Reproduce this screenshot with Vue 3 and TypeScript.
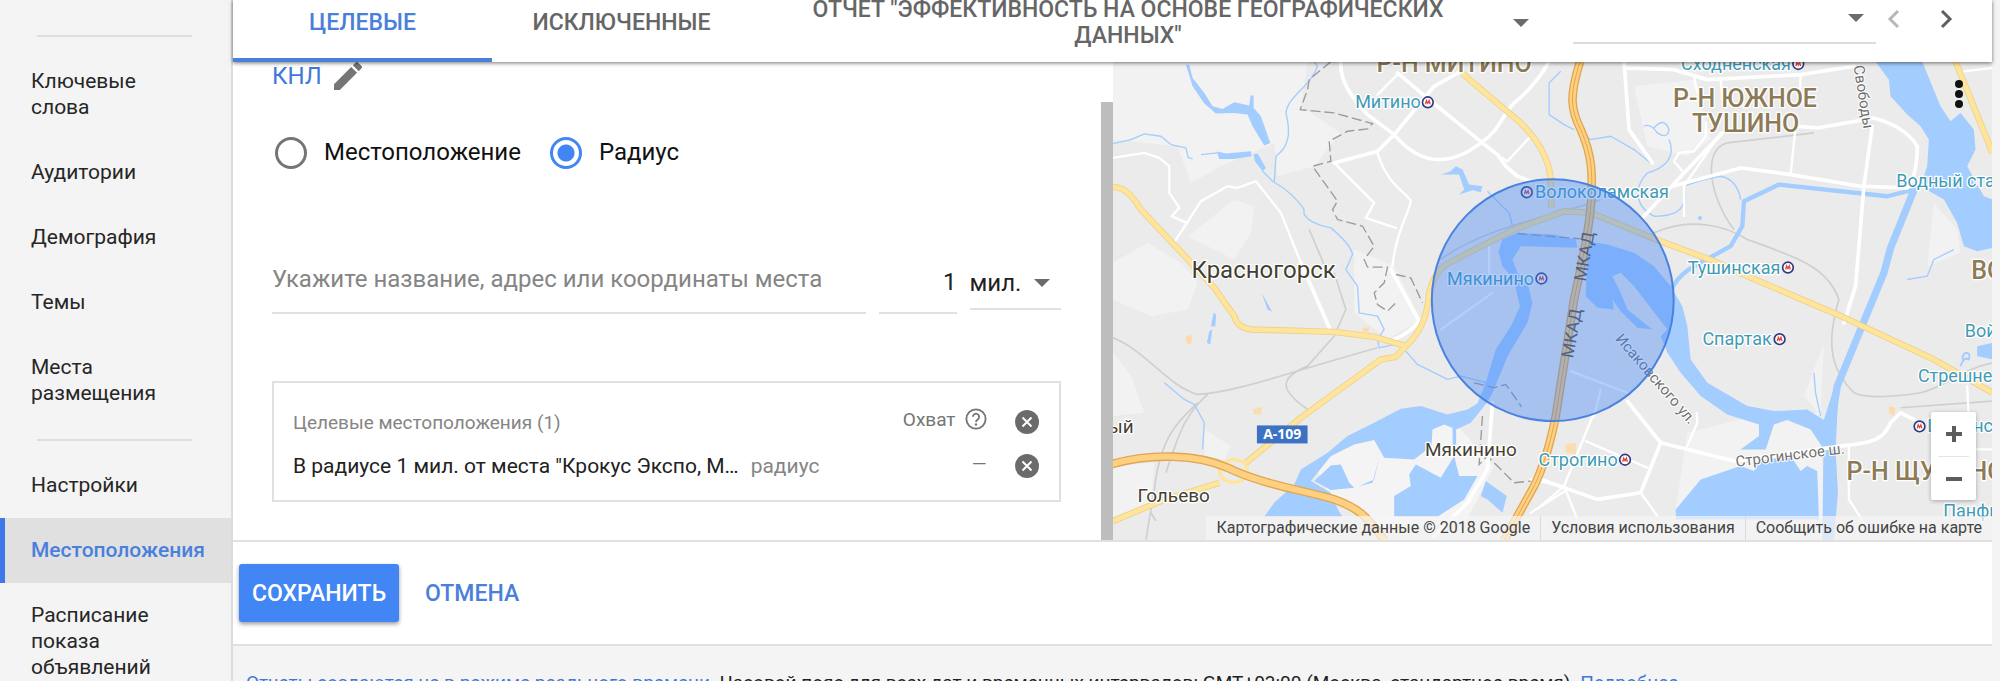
<script setup lang="ts">
import { ref } from 'vue'

interface NavItem {
  label: string
  active?: boolean
  divider?: boolean
}

interface MapLabel {
  text: string
  x: number
  y: number
  kind: 'metro' | 'city' | 'town' | 'district' | 'street' | 'highway'
  rotate?: number
  anchor?: 'start' | 'middle' | 'end'
}

const navItems: NavItem[] = [
  { label: 'Группы', divider: true },
  { label: 'Ключевые слова' },
  { label: 'Аудитории' },
  { label: 'Демография' },
  { label: 'Темы' },
  { label: 'Места размещения', divider: true },
  { label: 'Настройки' },
  { label: 'Местоположения', active: true },
  { label: 'Расписание показа объявлений' },
]

const mode = ref<'place' | 'radius'>('radius')
const query = ref('')
const distance = ref('1')
const unit = ref('mi')
const period = ref('')

const lowerLabels: MapLabel[] = [
  { text: 'Волоколамская', x: 1303, y: 596, kind: 'metro', anchor: 'start' },
  { text: 'Мякинино', x: 1300, y: 855, kind: 'metro', anchor: 'end' },
  { text: 'МКАД', x: 1468, y: 774, kind: 'highway', rotate: -80 },
  { text: 'МКАД', x: 1430, y: 1004, kind: 'highway', rotate: -80 },
  { text: 'Исаковского ул.', x: 1654, y: 1148, kind: 'street', rotate: 49 },
]

const labels: MapLabel[] = [
  { text: 'Р-Н МИТИНО', x: 1060, y: 216, kind: 'district' },
  { text: 'Р-Н ЮЖНОЕ', x: 1933, y: 323, kind: 'district' },
  { text: 'ТУШИНО', x: 1935, y: 397, kind: 'district' },
  { text: 'ВОЙ', x: 2612, y: 838, kind: 'district', anchor: 'start' },
  { text: 'Р-Н ЩУКИНО', x: 2238, y: 1442, kind: 'district', anchor: 'start' },
  { text: 'Красногорск', x: 488, y: 836, kind: 'city' },
  { text: 'Мякинино', x: 1110, y: 1370, kind: 'town' },
  { text: 'Гольево', x: 218, y: 1508, kind: 'town' },
  { text: 'ый', x: 98, y: 1302, kind: 'town', anchor: 'end' },
  { text: 'Митино', x: 960, y: 326, kind: 'metro', anchor: 'end' },
  { text: 'Сходненская', x: 2071, y: 211, kind: 'metro', anchor: 'end' },
  { text: 'Тушинская', x: 2039, y: 822, kind: 'metro', anchor: 'end' },
  { text: 'Спартак', x: 2013, y: 1037, kind: 'metro', anchor: 'end' },
  { text: 'Строгино', x: 1551, y: 1399, kind: 'metro', anchor: 'end' },
  { text: 'Водный стадион', x: 2387, y: 562, kind: 'metro', anchor: 'start' },
  { text: 'Войковская', x: 2593, y: 1012, kind: 'metro', anchor: 'start' },
  { text: 'Стрешнево', x: 2452, y: 1149, kind: 'metro', anchor: 'start' },
  { text: 'Щукинская', x: 2480, y: 1299, kind: 'metro', anchor: 'start' },
  { text: 'Панфиловская', x: 2528, y: 1554, kind: 'metro', anchor: 'start' },
  { text: 'Свободы', x: 2274, y: 294, kind: 'street', rotate: 81 },
  { text: 'Строгинское ш.', x: 2070, y: 1382, kind: 'street', rotate: -7 },
]

const lowerStations = [
  [1278, 578],
  [1322, 837],
]
const stations = [
  [981, 308],
  [2093, 193],
  [2062, 804],
  [2037, 1019],
  [1573, 1381],
  [2457, 1281],
]

const dashes =
  'M690 186 L625 240 L620 270 L598 330 L700 340 L815 372 L800 388 L740 395 L685 425 L690 485 L635 500 L710 605 L695 630 L710 660 L785 680 L820 740 L790 780 L800 803 L860 803 L850 850 L820 880 L830 915 L860 935 L890 905 M885 825 L930 835 L965 910 M1145 1250 L1135 1395 L1160 1370 L1240 1450 L1290 1445 M1250 702 L1440 718 M1120 1150 L1180 1165 L1215 1155 L1240 1190 L1262 1222'
const minorRoads =
  'M36 475 L130 460 L175 475 L205 500 L205 580 L235 625 L212 650 L258 670 M215 735 L258 670 L300 605 L380 560 L410 565 L465 545 L540 640 L600 790 M830 285 L890 225 M1290 410 L1220 485 L1195 470 M700 490 L820 610 L795 655 L885 685 M830 460 C860 560 920 580 930 605 C920 650 885 700 875 800 M1780 230 L1790 280 M1860 240 L1865 300 M1750 650 L1750 560 L1860 400 M1750 520 L1720 485 L1735 460 L1780 455 L1815 410 L1816 370 M2085 380 L2070 525 M2100 225 L2098 300 M1455 1325 L1640 1405 M1480 1240 L1390 1460 L1320 1520 M1390 1460 L1430 1560 M1620 1480 L1670 1550 M1760 1340 L1790 1270 L1788 1240 M2245 1340 L2245 1500 L2290 1570 M2600 1160 L2605 1260 M2605 1350 L2676 1350 M1175 880 L1020 990 M1165 740 L1165 850 M1410 1115 L1580 1180 M1500 1170 L1480 1250 M1290 1540 L1400 1470 M1290 1440 L1390 1460 M2590 215 L2676 205'
const mainRoads =
  'M600 790 L690 995 M720 186 C715 250 760 300 800 345 L880 405 C960 500 1050 500 1140 430 C1200 390 1200 350 1240 310 C1290 270 1320 230 1345 186 M700 490 L830 455 L880 405 L1000 260 L1080 215 M890 220 L985 300 L1145 430 L1190 465 L1215 500 L1250 530 L1290 545 M870 810 L955 965 Q930 1000 870 1025 M1570 186 L1585 390 L1655 490 M1570 205 L1720 210 L1820 240 L2100 225 L2260 200 M1630 650 L1750 520 L1865 400 M1715 560 L1920 505 L2070 525 L2280 560 L2420 565 C2450 530 2450 460 2450 440 C2420 390 2370 370 2320 355 L2150 385 L2085 380 M2315 380 L2290 560 L2265 860 L2230 970 M1580 1205 L1680 1330 L1900 1385 L2220 1340 C2320 1330 2350 1320 2370 1270 L2400 1240 L2440 1260 M1680 1330 L1620 1480 L1490 1500 L1320 1440 M1175 1210 L1160 1410 L1100 1510 L1000 1610'
const rails =
  'M36 1015 C130 1050 200 1160 290 1185 C400 1180 560 1120 830 1045 M700 820 L735 930 L700 1010 L620 1100 C520 1140 550 1180 620 1230 M320 1185 C260 1240 240 1280 195 1420 M290 1210 C240 1260 180 1300 160 1470 L135 1620 M150 1540 L165 1565 M625 690 L680 820 M1660 700 C1770 650 1880 680 1940 720 C2080 770 2180 800 2215 900 C2170 1050 2200 1120 2260 1180 C2300 1200 2400 1190 2460 1180 C2540 1160 2580 1110 2676 1090 M2140 400 L1880 430 C1800 450 1830 600 1900 690 M1020 780 C1150 680 1400 640 1500 600 M2400 1225 L2676 1205'
const streams =
  'M36 432 L90 420 L130 403 L180 410 L210 435 L255 445 L262 475 L275 477 M300 465 L350 460 M640 186 L650 200 C630 260 560 290 555 340 C570 400 565 440 525 470 L520 550 M485 515 L515 545 C560 570 590 600 610 630 C600 660 660 680 690 685 C720 710 750 740 755 765 L735 810 L770 860 L775 940 L830 950 L850 990 L830 1020 L835 1045 L880 1035 M915 1055 L950 1095 L1040 1140 L1080 1130 L1160 1150 M190 1150 L250 1200 L280 1215 L310 1270 L305 1350 M1380 215 L1345 250 L1345 345 L1390 375 L1420 390 M1430 395 L1470 420 L1530 410 L1600 450 L1650 490 M1630 380 Q1650 370 1670 400 Q1700 420 1705 390 Q1690 350 1660 385 M1705 420 C1730 480 1680 510 1640 520 C1600 560 1600 620 1660 650 C1740 650 1760 620 1750 560 Q1800 540 1860 530 Q1910 540 1920 600 M1160 575 L1225 640 L1235 680 M2140 1120 L2145 1180 L2160 1250 M2420 840 L2480 830 L2500 780 L2560 750'
</script>

<template>
  <div class="app">
    <nav class="sidebar" aria-label="Разделы">
      <template v-for="item in navItems" :key="item.label">
        <a href="#" class="nav-item" :class="{ active: item.active }">{{ item.label }}</a>
        <hr v-if="item.divider" class="nav-divider" />
      </template>
    </nav>

    <main class="main">
      <header class="topbar">
        <button type="button" class="tab selected">ЦЕЛЕВЫЕ</button>
        <button type="button" class="tab">ИСКЛЮЧЕННЫЕ</button>
        <button type="button" class="report">
          <span class="report-title">ОТЧЕТ "ЭФФЕКТИВНОСТЬ НА ОСНОВЕ ГЕОГРАФИЧЕСКИХ ДАННЫХ"</span>
          <svg class="caret" viewBox="0 0 16 8"><path d="M0 0H16L8 8Z" /></svg>
        </button>
        <div class="period">
          <select v-model="period" aria-label="Период">
            <option value=""></option>
          </select>
          <svg class="caret" viewBox="0 0 16 8"><path d="M0 0H16L8 8Z" /></svg>
        </div>
        <div class="arrows">
          <button type="button" class="arrow" aria-label="Назад" disabled>
            <svg viewBox="0 0 14 20"><path d="M11 2L3 10L11 18" /></svg>
          </button>
          <button type="button" class="arrow" aria-label="Вперед">
            <svg viewBox="0 0 14 20"><path d="M3 2L11 10L3 18" /></svg>
          </button>
        </div>
      </header>

      <section class="workspace">
        <div class="editor">
          <form class="form" @submit.prevent>
            <div class="campaign">
              <a href="#">КНЛ</a>
              <button type="button" class="icon-button" aria-label="Изменить">
                <svg class="pencil" viewBox="3 3 18 18">
                  <path d="M3 17.25V21h3.75L17.81 9.94l-3.75-3.75L3 17.25zM20.71 7.04a1 1 0 0 0 0-1.41l-2.34-2.34a1 1 0 0 0-1.41 0l-1.83 1.83 3.75 3.75 1.83-1.83z" />
                </svg>
              </button>
            </div>

            <div class="modes">
              <label><input v-model="mode" type="radio" name="mode" value="place" />Местоположение</label>
              <label><input v-model="mode" type="radio" name="mode" value="radius" />Радиус</label>
            </div>

            <div class="fields">
              <input v-model="query" class="field query" type="text" aria-label="Место" placeholder="Укажите название, адрес или координаты места" />
              <input v-model="distance" class="field distance" type="text" aria-label="Радиус" />
              <div class="unit">
                <select v-model="unit" aria-label="Единица измерения">
                  <option value="mi">мил.</option>
                  <option value="km">км</option>
                </select>
                <svg class="caret" viewBox="0 0 16 8"><path d="M0 0H16L8 8Z" /></svg>
              </div>
            </div>

            <div class="targets">
              <table>
                <thead>
                  <tr>
                    <th class="name">Целевые местоположения (1)</th>
                    <th class="reach">
                      <span class="reach-head">
                        Охват
                        <svg class="help" viewBox="0 0 24 24">
                          <circle cx="12" cy="12" r="10.5" />
                          <path d="M8.6 9.6a3.4 3.4 0 1 1 5.6 2.6c-1.3 1-2.2 1.5-2.2 3.1" />
                          <circle class="dot" cx="12" cy="18" r="1.3" />
                        </svg>
                      </span>
                    </th>
                    <th class="remove">
                      <button type="button" class="icon-button" aria-label="Удалить все">
                        <svg class="cancel" viewBox="0 0 24 24"><circle cx="12" cy="12" r="12" /><path d="M7.5 7.5L16.5 16.5M16.5 7.5L7.5 16.5" /></svg>
                      </button>
                    </th>
                  </tr>
                </thead>
                <tbody>
                  <tr>
                    <td class="name">В радиусе 1 мил. от места "Крокус Экспо, М…<span class="type">радиус</span></td>
                    <td class="reach dash">—</td>
                    <td class="remove">
                      <button type="button" class="icon-button" aria-label="Удалить">
                        <svg class="cancel" viewBox="0 0 24 24"><circle cx="12" cy="12" r="12" /><path d="M7.5 7.5L16.5 16.5M16.5 7.5L7.5 16.5" /></svg>
                      </button>
                    </td>
                  </tr>
                </tbody>
              </table>
            </div>
          </form>
          <div class="scroll-track"><div class="scroll-thumb"></div></div>
        </div>

        <div class="map">
          <svg class="map-canvas" viewBox="36 186 2640 1437" preserveAspectRatio="xMidYMid slice">
            <rect x="-400" y="-400" width="3600" height="2600" fill="#ebebeb" />
            <g fill="#f2f2f2">
              <path d="M36 186H620L600 320L720 400L640 500L530 530L520 430L360 500L270 550L230 440L36 420Z" />
              <path d="M260 710L400 600L460 620L450 700L400 780Z" />
              <path d="M36 790L140 730L240 790L290 850L260 930L150 950L36 900Z" />
              <path d="M36 1060L90 1130L130 1240L36 1250Z M310 1290L390 1340L370 1380L310 1370Z" />
              <path d="M36 1400L160 1390L150 1510L36 1560Z" />
              <path d="M760 750L880 800L960 960L860 1020L760 940Z" />
              <path d="M640 1400L820 1300L1060 1270L1180 1400L1100 1560L860 1600L700 1510Z" fill="#f4f4f4" />
              <path d="M1600 260L1780 240L1830 420L1760 470L1640 440Z" />
              <path d="M1760 1300L1980 1245L2160 1240L2170 1560L1720 1560Z" />
              <path d="M2500 610L2570 690L2580 760L2480 800Z M2110 1190L2170 1030L2160 1250Z" />
            </g>
            <path :d="rails" fill="none" stroke="#cfcfcf" stroke-width="5" />
            <g fill="#a3ccff">
              <path d="M255 195L265 195L275 235L310 280L335 320L365 328L400 308L445 318L449 288L458 288L458 325L480 350L508 430L490 438L455 380L440 345L400 340L345 342L310 312L275 260Z" />
              <path d="M348 456L375 462L450 455L452 470L400 478L355 478Z M458 465L470 462L495 505L485 515L462 485Z" />
              <path d="M1020 525L1050 515L1065 500L1085 510L1105 555L1145 560L1140 578L1115 572L1075 585L1090 570L1075 525Z" />
              <path d="M338 940L346 945L343 980L330 980Z M325 995L334 990L328 1035L318 1030Z M482 880L514 937L500 930Z" />
              <path d="M1425 720L1360 705L1250 700L1205 720L1193 755L1205 800L1240 840L1250 890L1258 920L1230 980L1185 1050L1155 1150L1130 1212L1100 1230L1040 1245L960 1220L900 1228L830 1265L740 1310L680 1360L600 1410L580 1455L520 1510L490 1552L560 1552L600 1490L660 1490L720 1552L690 1480L630 1445L690 1370L760 1335L820 1322L850 1375L940 1380L992 1340L995 1290L1030 1275L1055 1285L1056 1360L1066 1360L1066 1290L1110 1270L1160 1208L1175 1180L1200 1120L1220 1070L1280 970L1295 910L1280 850L1250 820L1235 780L1260 740L1430 745Z" />
              <path d="M640 1445L690 1398L720 1395L745 1450L760 1465L690 1472Z M560 1552L600 1480L690 1500L725 1552Z M835 1375L820 1440L775 1460L815 1450Z" />
              <path d="M945 1395L1020 1435L1060 1370L1075 1430L1130 1430L1090 1500L1010 1552L880 1552L880 1490L930 1460L925 1425Z" />
              <path d="M1155 1445L1218 1490L1205 1540L1160 1500L1140 1490Z" />
              <path d="M1460 725L1520 735L1600 760L1660 800L1710 860L1745 920L1760 980L1770 1080L1820 1150L1940 1220L2020 1235L2120 1230L2170 1262L2170 1350L2130 1290L2060 1262L2020 1275L1995 1350L1920 1350L1975 1310L1975 1275L1880 1245L1800 1190L1740 1120L1700 1060L1680 1010L1700 990L1600 860L1560 820L1535 830L1560 880L1580 930L1655 990L1610 985L1560 935L1535 900L1540 930L1490 925L1455 890Z" />
              <path d="M2325 186L2365 240L2370 290L2420 345L2460 380L2485 420L2480 500L2460 560L2530 600L2570 670L2590 740L2630 755L2676 745V600L2650 590L2600 500L2625 450L2620 390L2580 340L2550 365L2520 320L2465 186Z" />
              <path d="M1725 1530L1800 1440L1920 1400L1960 1415L1980 1385L2070 1370L2100 1415L2120 1400L2150 1415L2155 1560H1725Z" />
              <path d="M2205 1150L2215 1150L2205 1350L2212 1480L2200 1623H2165L2170 1260Z M2630 1040L2676 1030V1080L2630 1070Z" />
              <circle cx="1798" cy="655" r="6" />
            </g>
            <g fill="none" stroke="#a3ccff" stroke-linejoin="round">
              <path d="M1700 900Q1720 830 1790 795L1890 740L1925 680L1930 605L2035 555L2360 590L2440 570" stroke-width="13" />
              <path d="M2445 560L2370 745L2350 820L2210 1160L2188 1300" stroke-width="22" />
              <path :d="streams" stroke-width="4" />
              <path d="M2580 1100Q2590 1070 2605 1080Q2612 1060 2595 1060Q2580 1070 2590 1085" stroke-width="6" />
            </g>
            <path :d="dashes" fill="none" stroke="#9a9a9a" stroke-width="4" stroke-dasharray="30 12" />
            <g fill="none" stroke="#ffffff" stroke-linejoin="round" stroke-linecap="round">
              <path :d="minorRoads" stroke-width="7" />
              <path :d="mainRoads" stroke-width="11" />
            </g>
            <g fill="none" stroke-linejoin="round">
              <g v-for="pass in 2" :key="pass" :stroke="pass === 1 ? '#ecd08a' : '#ffe59c'" :stroke-width="pass === 1 ? 19 : 14">
                <path d="M36 562C80 565 100 600 120 630L280 800L340 865L400 950Q410 985 450 990L700 997L820 1012L915 1040C960 1000 980 950 985 880C1000 820 1030 795 1050 787L1240 690L1390 635L1470 640L1680 725L1840 785L1940 830L2210 945L2500 1080L2676 1180" />
                <path d="M1085 222L1260 370C1330 440 1350 500 1350 550L1352 625" />
                <path d="M36 1565L180 1505L355 1450M435 1390L600 1255L840 1080L885 1072L915 1040" />
                <path d="M2565 186L2676 460" />
              </g>
              <ellipse cx="398" cy="1415" rx="42" ry="34" stroke="#ffe59c" stroke-width="10" />
              <g v-for="pass in 2" :key="pass + 2" :stroke="pass === 1 ? '#dfa750' : '#ffcf82'" :stroke-width="pass === 1 ? 26 : 18">
                <path d="M30 1395C150 1360 290 1365 380 1405C480 1455 620 1475 700 1500C770 1525 800 1550 850 1623" />
                <path d="M1438 186C1405 290 1410 330 1440 390C1475 470 1475 520 1472 600C1465 700 1445 780 1420 900L1365 1250C1345 1350 1320 1420 1300 1460L1210 1623" />
              </g>
              <path d="M1438 186C1405 290 1410 330 1440 390C1475 470 1475 520 1472 600C1465 700 1445 780 1420 900L1365 1250C1345 1350 1320 1420 1300 1460L1210 1623" stroke="#dfa750" stroke-width="3" />
            </g>
            <g fill="#fbdcae">
              <path d="M255 1010L275 1005L270 1035L255 1030Z M455 1230L485 1222L480 1245L460 1245Z M785 985L805 985L800 1005L785 1000Z M1395 1335L1425 1330L1425 1365L1395 1360Z M2365 1220L2385 1225L2380 1250L2365 1240Z" />
            </g>

            <text
              v-for="(label, index) in lowerLabels"
              :key="'lower' + index"
              :class="['map-label', label.kind]"
              :text-anchor="label.anchor ?? 'middle'"
              :transform="`translate(${label.x} ${label.y}) rotate(${label.rotate ?? 0})`"
            >{{ label.text }}</text>
            <g v-for="(point, index) in lowerStations" :key="'ls' + index" class="station" :transform="`translate(${point[0]} ${point[1]})`">
              <circle r="16" /><path d="M-7 6L-4 -5L0 3L4 -5L7 6" />
            </g>

            <circle cx="1356" cy="902" r="363" fill="#4285f4" fill-opacity="0.4" stroke="#4a82e0" stroke-width="6" />

            <rect x="468" y="1278" width="152" height="54" fill="#3c72c4" />
            <text class="shield" x="544" y="1320" text-anchor="middle">А-109</text>
            <text
              v-for="(label, index) in labels"
              :key="'label' + index"
              :class="['map-label', label.kind]"
              :text-anchor="label.anchor ?? 'middle'"
              :transform="`translate(${label.x} ${label.y}) rotate(${label.rotate ?? 0})`"
            >{{ label.text }}</text>
            <g v-for="(point, index) in stations" :key="'st' + index" class="station" :transform="`translate(${point[0]} ${point[1]})`">
              <circle r="16" /><path d="M-7 6L-4 -5L0 3L4 -5L7 6" />
            </g>
          </svg>

          <button type="button" class="map-menu" aria-label="Меню карты">
            <svg viewBox="0 0 8 28"><circle cx="4" cy="4" r="4" /><circle cx="4" cy="14" r="4" /><circle cx="4" cy="24" r="4" /></svg>
          </button>
          <div class="zoom">
            <button type="button" aria-label="Увеличить">
              <svg viewBox="0 0 18 18"><path d="M9 1V17M1 9H17" /></svg>
            </button>
            <button type="button" aria-label="Уменьшить">
              <svg viewBox="0 0 18 18"><path d="M1 9H17" /></svg>
            </button>
          </div>
          <div class="credits">
            <span>Картографические данные © 2018 Google</span>
            <a href="#">Условия использования</a>
            <a href="#">Сообщить об ошибке на карте</a>
          </div>
        </div>
      </section>

      <div class="actions">
        <button type="button" class="save">СОХРАНИТЬ</button>
        <button type="button" class="dismiss">ОТМЕНА</button>
      </div>

      <footer class="note">
        <a href="#">Отчеты создаются не в режиме реального времени.</a>
        Часовой пояс для всех дат и временных интервалов: GMT+03:00 (Москва, стандартное время).
        <a href="#">Подробнее</a>
      </footer>
    </main>
  </div>
</template>

<style>
body {
  margin: 0;
  background: #f4f4f4;
}
</style>

<style scoped>
.app {
  display: flex;
  height: 100vh;
  overflow: hidden;
  background: #f4f4f4;
  color: #212121;
  font-family: Roboto, 'Noto Sans', sans-serif;
  font-size: 21px;
}

.app * {
  box-sizing: border-box;
}

a {
  color: #3f78d8;
  text-decoration: none;
}

button {
  padding: 0;
  border: 0;
  background: none;
  color: inherit;
  font: inherit;
  cursor: pointer;
}

input,
select {
  font-family: inherit;
  border-radius: 0;
}

svg {
  display: block;
}

.caret {
  width: 16px;
  height: 8px;
  fill: #6b6b6b;
  pointer-events: none;
}

/* Sidebar */
.sidebar {
  flex: 0 0 233px;
  display: flex;
  flex-direction: column;
  margin-top: -43px;
  border-right: 2px solid #dcdcdc;
}

.nav-item {
  padding: 19px 44px 20px 31px;
  color: #262626;
  line-height: 26px;
}

.nav-item.active {
  padding-left: 26px;
  padding-right: 0;
  border-left: 5px solid #4077e8;
  background: #e0e0e0;
  color: #4a80dc;
  font-weight: 500;
}

.nav-divider {
  width: 155px;
  margin: 13px 0 12px 37px;
  border: 0;
  border-top: 2px solid #dedede;
}

/* Top bar */
.main {
  flex: 1;
  min-width: 0;
  display: flex;
  flex-direction: column;
  margin-right: 8px;
}

.topbar {
  position: relative;
  z-index: 2;
  display: flex;
  height: 62px;
  flex: none;
  background: #fff;
  box-shadow: 0 1px 4px rgba(0, 0, 0, 0.55);
  color: #666;
  font-size: 23px;
  font-weight: 500;
  line-height: 26px;
}

.tab {
  flex: 0 0 259px;
  padding-bottom: 12px;
  border-bottom: 4px solid transparent;
}

.tab.selected {
  border-color: #4a80dc;
  color: #4a80dc;
}

.report {
  flex: 1;
  display: flex;
  align-items: center;
  padding: 0 44px 16px 32px;
}

.report-title {
  flex: 1;
  padding-right: 40px;
}

.period {
  flex: 0 0 303px;
  display: flex;
  align-items: center;
  height: 44px;
  padding-right: 12px;
  border-bottom: 2px solid #dcdcdc;
}

.period select {
  flex: 1;
  height: 36px;
  border: 0;
  background: none;
  appearance: none;
}

.period .caret {
  margin-bottom: 6px;
}

.arrows {
  display: flex;
  align-items: flex-start;
  gap: 38px;
  padding: 9px 39px 0 11px;
}

.arrow svg {
  width: 14px;
  height: 20px;
  fill: none;
  stroke: #5f5f5f;
  stroke-width: 3;
}

.arrow:disabled svg {
  stroke: #b8b8b8;
}

/* Editor */
.workspace {
  flex: none;
  display: flex;
  border-bottom: 2px solid #e0e0e0;
}

.editor {
  flex: 0 0 50%;
  display: flex;
  background: #fff;
}

.form {
  flex: 1;
  min-width: 0;
  padding: 0 40px 38px 39px;
}

.campaign {
  display: flex;
  align-items: center;
  gap: 12px;
  height: 28px;
  font-size: 24px;
}

.pencil {
  width: 28px;
  height: 28px;
  fill: #757575;
}

.modes {
  display: flex;
  gap: 26px;
  margin-top: 44px;
  color: #111;
  font-size: 24px;
}

.modes label {
  display: flex;
  align-items: center;
  height: 36px;
}

.modes input {
  appearance: none;
  width: 32px;
  height: 32px;
  margin: 2px 17px 0 3px;
  border: 3px solid #757575;
  border-radius: 50%;
}

.modes input:checked {
  border-color: #4285f4;
  background: radial-gradient(circle, #4285f4 8px, #fff 9px);
}

.fields {
  display: flex;
  align-items: flex-start;
  gap: 13px;
  margin-top: 92px;
}

.field {
  height: 52px;
  padding: 0 0 16px;
  border: 0;
  border-bottom: 2px solid #e0e0e0;
  outline: 0;
  background: none;
  color: #212121;
  font-size: 24px;
}

.query {
  flex: 1;
  min-width: 0;
}

.query::placeholder {
  color: #858585;
  opacity: 1;
}

.distance {
  width: 78px;
  padding-bottom: 10px;
  text-align: right;
}

.unit {
  display: flex;
  align-items: center;
  height: 48px;
  width: 91px;
  padding: 0 11px 4px 0;
  border-bottom: 2px solid #e0e0e0;
}

.unit select {
  flex: 1;
  min-width: 0;
  padding: 0;
  border: 0;
  background: none;
  color: #212121;
  font-size: 24px;
  appearance: none;
}

.targets {
  margin-top: 67px;
  padding: 17px 20px 12px 19px;
  border: 2px solid #e0e0e0;
}

table {
  width: 100%;
  border-collapse: collapse;
}

th,
td {
  height: 44px;
  padding: 0;
  font-weight: 400;
  text-align: left;
  white-space: nowrap;
}

th {
  color: #858585;
  font-size: 19px;
}

.type {
  margin-left: 12px;
  color: #858585;
}

.reach {
  width: 90px;
  color: #757575;
  text-align: right;
}

.reach-head {
  display: flex;
  align-items: center;
  justify-content: flex-end;
  gap: 9px;
  padding-bottom: 6px;
}

.dash {
  padding-bottom: 6px;
  font-size: 19px;
}

.help {
  width: 22px;
  height: 22px;
  fill: none;
  stroke: #757575;
  stroke-width: 2;
}

.help .dot {
  fill: #757575;
  stroke: none;
}

.remove {
  width: 52px;
}

.remove .icon-button {
  display: block;
  margin-left: auto;
}

.cancel {
  width: 24px;
  height: 24px;
  fill: #6b6b6b;
  stroke: #fff;
  stroke-width: 2;
}

.cancel circle {
  stroke: none;
}

.scroll-track {
  flex: 0 0 12px;
  display: flex;
  padding-top: 40px;
}

.scroll-thumb {
  flex: 1;
  background: #bdbdbd;
}

/* Map */
.map {
  position: relative;
  flex: 1;
  min-width: 0;
  overflow: hidden;
}

.map-canvas {
  position: absolute;
  inset: 0;
  width: 100%;
  height: 100%;
}

.map-label {
  paint-order: stroke;
  stroke: #fff;
  stroke-width: 8px;
  stroke-linejoin: round;
}

.map-label.metro {
  fill: #3f9bb5;
  font-size: 54px;
}

.map-label.city {
  fill: #453f33;
  font-size: 72px;
}

.map-label.town {
  fill: #453f33;
  font-size: 57px;
}

.map-label.district {
  fill: #8d7b57;
  font-size: 75px;
  font-weight: 500;
}

.map-label.street {
  fill: #707070;
  stroke-width: 6px;
  font-size: 45px;
}

.map-label.highway {
  fill: #5c4a35;
  stroke: none;
  font-size: 51px;
}

.shield {
  fill: #fff;
  font-family: 'Open Sans', 'Noto Sans', sans-serif;
  font-size: 42px;
  font-weight: 700;
}

.station {
  fill: none;
  stroke: #e0483e;
  stroke-width: 4;
}

.station circle {
  fill: #fff;
  stroke: #2f3b80;
  stroke-width: 5;
}

.map-menu {
  position: absolute;
  top: 18px;
  right: 29px;
}

.map-menu svg {
  width: 8px;
  height: 28px;
  fill: #111;
}

.zoom {
  position: absolute;
  right: 16px;
  bottom: 40px;
  display: flex;
  flex-direction: column;
  width: 45px;
  padding: 0 7px;
  border-radius: 2px;
  background: #fff;
  box-shadow: 0 1px 4px rgba(0, 0, 0, 0.3);
}

.zoom button {
  display: flex;
  align-items: center;
  justify-content: center;
  height: 44px;
}

.zoom button + button {
  border-top: 1px solid #e6e6e6;
}

.zoom svg {
  width: 18px;
  height: 18px;
  stroke: #5c5c5c;
  stroke-width: 4;
}

.credits {
  position: absolute;
  right: 0;
  bottom: 0;
  display: flex;
  background: rgba(245, 245, 245, 0.7);
  font-size: 16px;
  line-height: 24px;
  white-space: nowrap;
}

.credits > * {
  padding: 0 10px;
  color: #444;
}

.credits > * + * {
  border-left: 1px solid #d5dce6;
}

/* Footer */
.actions {
  flex: none;
  display: flex;
  align-items: center;
  gap: 26px;
  height: 104px;
  padding-left: 6px;
  border-bottom: 2px solid #e0e0e0;
  background: #fff;
  font-size: 23px;
  font-weight: 500;
}

.save {
  width: 160px;
  height: 58px;
  border-radius: 3px;
  background: #4285f4;
  box-shadow: 0 2px 4px rgba(0, 0, 0, 0.4);
  color: #fff;
}

.dismiss {
  color: #4a80dc;
}

.note {
  flex: none;
  padding: 24px 13px 0;
  font-size: 19px;
  line-height: 26px;
  white-space: nowrap;
}
</style>
